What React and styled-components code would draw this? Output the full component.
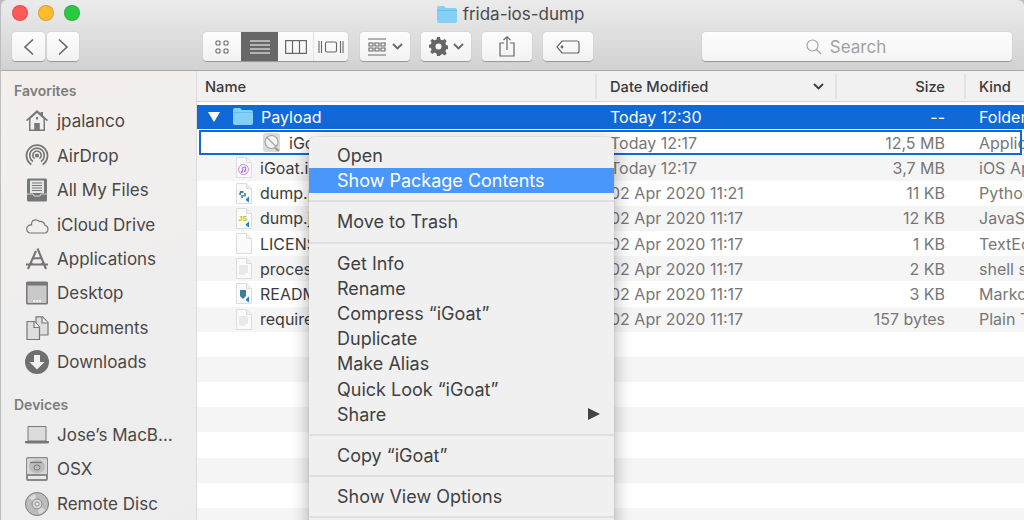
import React from 'react';
import styled, { createGlobalStyle } from 'styled-components';

const GlobalStyle = createGlobalStyle`
  html, body { margin: 0; padding: 0; background: #c9c9c9; }
  body { font-family: Inter, "Liberation Sans", sans-serif; }
`;

const COLUMNS = '398px 240px 129px 1fr';

const Page = styled.div`
  width: 1024px;
  height: 520px;
  overflow: hidden;
  position: relative;
  display: flex;
  flex-direction: column;
  box-sizing: border-box;
  padding-left: 1px;
  background: #bdbdbd;
`;

const TitleBar = styled.header`
  height: 71px;
  flex: none;
  box-sizing: border-box;
  padding: 5px 11px 0;
  border-radius: 6px 6px 0 0;
  border-bottom: 1px solid #a9a8a9;
  background: linear-gradient(#ebebeb, #d3d2d3);
`;

const TopRow = styled.div`
  height: 27px;
  display: flex;
  align-items: flex-start;
  position: relative;
  justify-content: center;
`;

const Lights = styled.div`
  position: absolute;
  left: 0;
  top: 0;
  display: flex;
  gap: 10px;
`;

const Light = styled.span`
  width: 16px;
  height: 16px;
  border-radius: 50%;
  background: ${p => p.$color};
  border: 0.5px solid rgba(0, 0, 0, 0.12);
  box-sizing: border-box;
`;

const Title = styled.div`
  display: flex;
  align-items: center;
  gap: 6px;
  height: 18px;
  margin-right: 4px;
  font-size: 17px;
  color: #4b4a4b;
`;

const Toolbar = styled.div`
  display: flex;
  align-items: stretch;
  height: 29px;
`;

const Btn = styled.button`
  display: flex;
  align-items: center;
  justify-content: center;
  gap: 5px;
  width: ${p => p.$w}px;
  margin-left: ${p => p.$ml || 0}px;
  padding: 0;
  height: 29px;
  background: linear-gradient(#fdfdfd, #f2f2f2);
  border: none;
  border-radius: 4px;
  box-shadow: 0 0.5px 1px rgba(0, 0, 0, 0.3);
  color: #666;
`;

const Segment = styled.div`
  display: flex;
  margin-left: ${p => p.$ml}px;
  border-radius: 4px;
  overflow: hidden;
  box-shadow: 0 0.5px 1px rgba(0, 0, 0, 0.3);
`;

const SegItem = styled.div`
  width: ${p => p.$w}px;
  display: flex;
  align-items: center;
  justify-content: center;
  background: ${p => (p.$on ? '#676767' : 'linear-gradient(#fdfdfd, #f2f2f2)')};
  color: ${p => (p.$on ? '#fff' : '#666')};
  border-left: ${p => (p.$line ? '1px solid #e2e2e2' : 'none')};
  box-sizing: border-box;
`;

const SearchBox = styled.div`
  width: 310px;
  margin-left: 109px;
  height: 29px;
  box-sizing: border-box;
  padding-right: 22px;
  display: flex;
  align-items: center;
  justify-content: center;
  gap: 8px;
  font-size: 17px;
  color: #a3a1a3;
  background: linear-gradient(#fdfdfd, #f4f4f4);
  border-radius: 4px;
  box-shadow: 0 0.5px 1px rgba(0, 0, 0, 0.3);
`;

const Body = styled.div`
  flex: 1;
  min-height: 0;
  display: flex;
`;

const Sidebar = styled.aside`
  width: 196px;
  flex: none;
  box-sizing: border-box;
  padding: 11px 0 0 13px;
  background: linear-gradient(160deg, #f4efed, #eeeeee 60%, #ededee);
  border-right: 1px solid #dcdcdc;
`;

const SideHead = styled.div`
  font-size: 14px;
  font-weight: 600;
  line-height: 17px;
  color: #7f7c7c;
  margin-top: ${p => (p.$top ? '16px' : '0')};
  padding-bottom: 5px;
`;

const SideItem = styled.div`
  height: 34.45px;
  display: flex;
  align-items: center;
  gap: 8px;
  padding-left: 11px;
  font-size: 17px;
  color: #4a4747;
  white-space: nowrap;
`;

const IconSlot = styled.span`
  width: 24px;
  height: 24px;
  flex: none;
  display: flex;
  align-items: center;
  justify-content: center;
  color: #757575;
`;

const Main = styled.main`
  flex: 1;
  min-width: 0;
  display: flex;
  flex-direction: column;
  background: #fff;
`;

const HeaderRow = styled.div`
  height: 31px;
  flex: none;
  display: grid;
  grid-template-columns: ${COLUMNS};
  box-sizing: border-box;
  background: #f1f1f1;
  border-bottom: 1px solid #d4d4d4;
  font-size: 14.7px;
  font-weight: 500;
  color: #3a3a3a;
`;

const HeadCell = styled.div`
  display: flex;
  align-items: center;
  justify-content: ${p => (p.$right ? 'flex-end' : 'space-between')};
  height: 25px;
  margin-top: 3px;
  padding: 0 ${p => p.$pr}px 0 ${p => p.$pl}px;
  border-left: ${p => (p.$line ? '2px solid #e2e2e2' : 'none')};
  box-sizing: border-box;
`;

const Rows = styled.div`
  flex: 1;
  display: flex;
  flex-direction: column;
  overflow: hidden;
  padding-top: 3px;
  background: #fff;
`;

const Row = styled.div`
  position: relative;
  height: ${p => (p.$selected ? '23.5px' : '25.2px')};
  margin-bottom: ${p => (p.$selected ? '1.7px' : '0')};
  flex: none;
  display: grid;
  grid-template-columns: ${COLUMNS};
  align-items: center;
  box-sizing: border-box;
  font-size: 16px;
  white-space: nowrap;
  overflow: hidden;
  color: ${p => (p.$selected ? '#fff' : '#777')};
  background: ${p => (p.$selected ? '#1169d8' : p.$stripe ? '#f5f5f5' : '#fff')};
`;

const Outline = styled.span`
  position: absolute;
  inset: 0 2px 0 2px;
  border: 2.5px solid #1169d8;
  pointer-events: none;
`;

const NameCell = styled.div`
  display: flex;
  align-items: center;
  padding-left: ${p => p.$indent}px;
  gap: 8px;
  color: ${p => (p.$selected ? '#fff' : '#3c3c3c')};
  min-width: 0;
`;

const Disclosure = styled.svg`
  margin-right: 5px;
`;

const DateCell = styled.div`
  padding-left: 15px;
`;

const SizeCell = styled.div`
  padding-right: 19px;
  text-align: right;
`;

const KindCell = styled.div`
  padding-left: 15px;
`;

const Menu = styled.div`
  position: absolute;
  left: 309px;
  top: 137px;
  width: 305px;
  height: 400px;
  padding-top: 6px;
  box-sizing: border-box;
  background: #f0f0f0;
  border-radius: 5px;
  box-shadow: 0 4px 18px rgba(0, 0, 0, 0.32), 0 0 1px rgba(0, 0, 0, 0.4);
  font-size: 18px;
  color: #414141;
`;

const MenuItem = styled.div`
  height: 25.2px;
  display: flex;
  align-items: center;
  justify-content: space-between;
  padding: 0 14px 0 28px;
  white-space: nowrap;
  background: ${p => (p.$on ? '#4a97fb' : 'transparent')};
  color: ${p => (p.$on ? '#fff' : 'inherit')};
`;

const MenuSep = styled.div`
  height: 2px;
  margin: 7px 0;
  background: #dfdfdf;
`;

const Arrow = styled.span`
  width: 0;
  height: 0;
  border-left: 12px solid #444;
  border-top: 6.5px solid transparent;
  border-bottom: 6.5px solid transparent;
`;

const Folder = ({ w = 20, h = 17 }) => (
  <svg width={w} height={h} viewBox="0 0 20 17">
    <path d="M0 2q0-2 2-2h5l2 2h9q2 0 2 2v11q0 2-2 2H2q-2 0-2-2z" fill="#83cff6" />
    <path d="M0 4h20v1H0z" fill="#6cbdea" />
  </svg>
);

const Stroke = ({ w = 24, h = 24, vb = '0 0 24 24', sw = 1.3, children }) => (
  <svg width={w} height={h} viewBox={vb} fill="none" stroke="currentColor" strokeWidth={sw}>
    {children}
  </svg>
);

const sideIcons = {
  home: (
    <svg width="24" height="24" viewBox="0 0 24 24">
      <path d="M12 1 1 11l1 1.2L4 10.500V22h16V10.500l2 1.700 1-1.200L18 6.500V3h-2.500v1.300z" fill="#777" />
      <path d="M5.500 9.800 12 4l6.500 5.800V20.500h-4V14h-5v6.500h-4z" fill="#efefef" />
      <path d="M9.500 14h5v8h-5z" fill="#777" />
      <path d="M11 8h2v2.500h-2z" fill="#777" />
    </svg>
  ),
  airdrop: (
    <Stroke sw={1.6}>
      <path d="M6.400 20.500a10.500 10.500 0 1 1 11.200 0" strokeWidth="1.800" />
      <path d="M8 17.500a7.300 7.300 0 1 1 8 0" />
      <path d="M9.600 14.700a4.200 4.200 0 1 1 4.800 0" />
      <circle cx="12" cy="11.500" r="1.300" fill="currentColor" />
    </Stroke>
  ),
  files: (
    <svg width="24" height="24" viewBox="0 0 24 24">
      <path d="M2 2q0-1.500 1.500-1.500h17Q22 .5 22 2v20q0 1.500-1.500 1.500h-17Q2 23.500 2 22z" fill="#777" />
      <path d="M5 2.500h14v12.500H5z" fill="#e6e6e6" />
      <path d="M7 5h10M7 7.500h10M7 10h10M7 12.500h10" stroke="#777" strokeWidth="1" />
      <path d="M2 16h6l1 2h6l1-2h6" stroke="#eee" strokeWidth="0.800" fill="none" />
    </svg>
  ),
  cloud: (
    <svg width="24" height="18" viewBox="0 0 24 18" fill="none" stroke="#777" strokeWidth="1.200">
      <path d="M5 17h14.500a3.800 3.800 0 0 0 .5-7.500 4.500 4.500 0 0 0-5.500-4A6 6 0 0 0 8 4.500 5 5 0 0 0 6.500 9 4 4 0 0 0 5 17z" />
    </svg>
  ),
  apps: (
    <Stroke sw={2.1}>
      <path d="M12.500 1.500 21 22M11 4 3 22M1 17.500h22M7.500 11.500l9-.5" />
      <path d="M5 15.500 8 17M19 15.500 16 17" strokeWidth="1.300" />
    </Stroke>
  ),
  desktop: (
    <svg width="24" height="24" viewBox="0 0 24 24">
      <path d="M1 2q0-1.500 1.500-1.500h19Q23 .5 23 2v20q0 1.500-1.500 1.500h-19Q1 23.500 1 22z" fill="#777" />
      <path d="M2.500 4.500h19V22h-19z" fill="#c9c9c9" />
      <path d="M8 19h2v2H8zM11 19h2v2h-2zM14 19h2v2h-2z" fill="#f2f2f2" />
    </svg>
  ),
  docs: (
    <svg width="24" height="24" viewBox="0 0 24 24" stroke="#777" strokeWidth="1.200">
      <path d="M11 .8h6.500L23 6.500V19H11z" fill="#dedede" />
      <path d="M17 1v6h6" fill="#f0f0f0" />
      <path d="M2 5.500h7.500L14.500 11v12.500H2z" fill="#dedede" />
      <path d="M9 5.500V11.500h5.500" fill="#f0f0f0" />
    </svg>
  ),
  down: (
    <svg width="24" height="24" viewBox="0 0 24 24">
      <circle cx="12" cy="12" r="12" fill="#6f6f6f" />
      <path d="M9 5h6v7h4.500L12 19.500 4.500 12H9z" fill="#f2f2f2" />
    </svg>
  ),
  laptop: (
    <svg width="24" height="18" viewBox="0 0 24 18">
      <path d="M2.500 1q0-1 1-1h17q1 0 1 1v14h-19z" fill="#777" />
      <path d="M3.500 1h17v13.500h-17z" fill="#dcdcdc" />
      <path d="M0 15h24v1.200q0 1.300-2 1.300H2q-2 0-2-1.300z" fill="#777" />
    </svg>
  ),
  disk: (
    <svg width="22" height="24" viewBox="0 0 22 24">
      <path d="M2 0h18q2 0 2 2v20q0 2-2 2H2q-2 0-2-2V2q0-2 2-2z" fill="#8a8a8a" />
      <path d="M2 1.200h18l1 1V17H1V2.200z" fill="#d6d6d6" />
      <ellipse cx="11" cy="9.500" rx="8" ry="7" fill="#bdbdbd" />
      <ellipse cx="11" cy="10.500" rx="3" ry="2.500" fill="none" stroke="#777" />
      <path d="M4 5.500h12" stroke="#777" strokeWidth="1.200" />
      <path d="M2 19h18v3H2z" fill="#e8e8e8" />
    </svg>
  ),
  disc: (
    <svg width="24" height="24" viewBox="0 0 24 24">
      <circle cx="12" cy="12" r="11.500" fill="#bcbcbc" stroke="#7a7a7a" />
      <path d="M12 12 4 6a10 10 0 0 1 6-4zM12 12l8 6a10 10 0 0 1-6 4z" fill="#dadada" />
      <circle cx="12" cy="12" r="5" fill="#d8d8d8" stroke="#8a8a8a" />
      <circle cx="12" cy="12" r="2" fill="#f3f3f3" stroke="#8a8a8a" />
    </svg>
  ),
};

const favorites = [
  ['home', 'jpalanco'],
  ['airdrop', 'AirDrop'],
  ['files', 'All My Files'],
  ['cloud', 'iCloud Drive'],
  ['apps', 'Applications'],
  ['desktop', 'Desktop'],
  ['docs', 'Documents'],
  ['down', 'Downloads'],
];

const devices = [
  ['laptop', 'Jose’s MacB…'],
  ['disk', 'OSX'],
  ['disc', 'Remote Disc'],
];

const Sheet = ({ children }) => (
  <svg width="17" height="21" viewBox="0 0 17 21">
    <path d="M1.500.5h10l5 5v15h-15z" fill="#fbfbfb" stroke="#dcdcdc" />
    <path d="M11.500.5v5h5" fill="#f0f0f0" stroke="#dcdcdc" />
    {children}
  </svg>
);

const TextLines = (
  <path d="M4 8h9M4 10h9M4 12h9M4 14h9M4 16h6" stroke="#cfcfcf" strokeWidth="0.800" />
);

const VsBadge = <path d="M11 16l3-2.500v6L11 17.500z" fill="#2f80c8" />;

const fileIcons = {
  app: (
    <svg width="18" height="20" viewBox="0 0 18 20">
      <rect width="17" height="19" rx="3" fill="#d9dcde" />
      <circle cx="8.500" cy="9" r="6.500" fill="#f4f4f4" stroke="#a5a5a5" strokeWidth="1.200" />
      <path d="M4 4.500l9 9" stroke="#a5a5a5" strokeWidth="1.200" />
      <path d="M12 15l4 3" stroke="#b39365" strokeWidth="2" />
    </svg>
  ),
  ipa: (
    <Sheet>
      <circle cx="8.500" cy="12.500" r="5" fill="#f7eef6" stroke="#d98ad0" />
      <path d="M7.500 15v-4.500l3-.5v4" stroke="#5c8fe0" strokeWidth="0.900" fill="none" />
      <circle cx="6.800" cy="15" r="0.900" fill="#c45fc0" />
      <circle cx="9.800" cy="14" r="0.900" fill="#c45fc0" />
    </Sheet>
  ),
  py: (
    <Sheet>
      <path d="M5 8h3.500v2H6v2H4z" fill="#3f7fa8" />
      <path d="M6 12h3v-2h2v3.500H8V15H6z" fill="#5f9a9f" />
      {VsBadge}
    </Sheet>
  ),
  js: (
    <Sheet>
      <text x="3.500" y="13" fontSize="7" fontWeight="700" fontFamily="Liberation Sans" fill="#c5b22c">JS</text>
      {VsBadge}
    </Sheet>
  ),
  blank: <Sheet />,
  text: <Sheet>{TextLines}</Sheet>,
  md: (
    <Sheet>
      <path d="M5 7h6v6l-3 3-3-3z" fill="#3c7f9c" />
      {VsBadge}
    </Sheet>
  ),
};

const files = [
  { icon: 'app', name: 'iGoat.app', date: 'Today 12:17', size: '12,5 MB', kind: 'Application', indent: 66, outlined: true },
  { icon: 'ipa', name: 'iGoat.ipa', date: 'Today 12:17', size: '3,7 MB', kind: 'iOS App', stripe: true },
  { icon: 'py', name: 'dump.py', date: '02 Apr 2020 11:21', size: '11 KB', kind: 'Python Script' },
  { icon: 'js', name: 'dump.js', date: '02 Apr 2020 11:17', size: '12 KB', kind: 'JavaScript', stripe: true },
  { icon: 'blank', name: 'LICENSE', date: '02 Apr 2020 11:17', size: '1 KB', kind: 'TextEdit' },
  { icon: 'text', name: 'process.sh', date: '02 Apr 2020 11:17', size: '2 KB', kind: 'shell script', stripe: true },
  { icon: 'md', name: 'README.md', date: '02 Apr 2020 11:17', size: '3 KB', kind: 'Markdown' },
  { icon: 'text', name: 'requirements.txt', date: '02 Apr 2020 11:17', size: '157 bytes', kind: 'Plain Text', stripe: true },
];

const Chevron = () => (
  <svg width="11" height="7" viewBox="0 0 11 7" fill="none" stroke="currentColor" strokeWidth="1.800">
    <path d="M1 1l4.500 4.500L10 1" />
  </svg>
);

const menu = [
  ['Open'],
  ['Show Package Contents', true],
  null,
  ['Move to Trash'],
  null,
  ['Get Info'],
  ['Rename'],
  ['Compress “iGoat”'],
  ['Duplicate'],
  ['Make Alias'],
  ['Quick Look “iGoat”'],
  ['Share', false, true],
  null,
  ['Copy “iGoat”'],
  null,
  ['Show View Options'],
  null,
];

export default function App() {
  return (
    <Page>
      <GlobalStyle />
      <TitleBar>
        <TopRow>
          <Lights>
            <Light $color="#fc5b57" />
            <Light $color="#fdbb2e" />
            <Light $color="#2ac940" />
          </Lights>
          <Title>
            <Folder />
            frida-ios-dump
          </Title>
        </TopRow>
        <Toolbar>
          <Btn $w={33}>
            <Stroke w={12} h={18} vb="0 0 12 18" sw={1.600}><path d="M10 1.500 2 9l8 7.500" /></Stroke>
          </Btn>
          <Btn $w={32} $ml={2}>
            <Stroke w={12} h={18} vb="0 0 12 18" sw={1.600}><path d="M2 1.500 10 9l-8 7.500" /></Stroke>
          </Btn>
          <Segment $ml={124}>
            <SegItem $w={38}>
              <Stroke w={14} h={14} vb="0 0 14 14" sw={1.100}>
                <rect x="1" y="1" width="4" height="4" rx="1" />
                <rect x="9" y="1" width="4" height="4" rx="1" />
                <rect x="1" y="9" width="4" height="4" rx="1" />
                <rect x="9" y="9" width="4" height="4" rx="1" />
              </Stroke>
            </SegItem>
            <SegItem $w={37} $on>
              <Stroke w={20} h={14} vb="0 0 20 14" sw={1.100}>
                <path d="M0 1h20M0 5h20M0 9h20M0 13h20" />
              </Stroke>
            </SegItem>
            <SegItem $w={35}>
              <Stroke w={22} h={14} vb="0 0 22 14" sw={1.200}>
                <rect x=".6" y=".6" width="20.800" height="12.800" />
                <path d="M7.500 1v12M14.500 1v12" />
              </Stroke>
            </SegItem>
            <SegItem $w={35} $line>
              <Stroke w={26} h={14} vb="0 0 26 14" sw={1.100}>
                <rect x="7.500" y="2" width="11" height="10" rx="1.500" />
                <path d="M1 1v12M3.500 1v12M22.500 1v12M25 1v12" />
              </Stroke>
            </SegItem>
          </Segment>
          <Btn $w={50} $ml={12}>
            <Stroke w={20} h={18} vb="0 0 20 18" sw={1.100}>
              <path d="M1 1h18M1 17h18" />
              <path d="M2 5h4v3H2zM8 5h4v3H8zM14 5h4v3h-4zM2 10h4v3H2zM8 10h4v3H8zM14 10h4v3h-4z" />
            </Stroke>
            <Chevron />
          </Btn>
          <Btn $w={50} $ml={11}>
            <svg width="19" height="19" viewBox="0 0 19 19">
              <path
                d="M8 0h3l.5 2.500 2 .8L15.700 2l2 2-1.300 2.200.8 2 2.800.5v3l-2.800.5-.8 2 1.300 2.200-2 2-2.200-1.300-2 .8L11 19H8l-.5-2.600-2-.8L3.300 17l-2-2 1.300-2.200-.8-2L0 10.700v-3l1.800-.5.800-2L1.300 4l2-2 2.200 1.300 2-.8z"
                fill="#666"
              />
              <circle cx="9.500" cy="9.500" r="3" fill="#f8f8f8" />
            </svg>
            <Chevron />
          </Btn>
          <Btn $w={50} $ml={11}>
            <Stroke w={16} h={21} vb="0 0 16 21" sw={1.200}>
              <path d="M5 7H1v13h14V7h-4M8 14V1M4.500 4 8 .8 11.500 4" />
            </Stroke>
          </Btn>
          <Btn $w={50} $ml={11}>
            <Stroke w={24} h={14} vb="0 0 24 14" sw={1.200}>
              <path d="M6 1h15q2 0 2 2v8q0 2-2 2H6L1 7z" />
              <circle cx="6" cy="7" r=".8" fill="currentColor" />
            </Stroke>
          </Btn>
          <SearchBox>
            <Stroke w={16} h={16} vb="0 0 16 16" sw={1.200}>
              <circle cx="6.500" cy="6.500" r="5.500" />
              <path d="M10.500 10.500 15 15" />
            </Stroke>
            Search
          </SearchBox>
        </Toolbar>
      </TitleBar>
      <Body>
        <Sidebar>
          <SideHead>Favorites</SideHead>
          {favorites.map(([icon, label]) => (
            <SideItem key={label}>
              <IconSlot>{sideIcons[icon]}</IconSlot>
              {label}
            </SideItem>
          ))}
          <SideHead $top>Devices</SideHead>
          {devices.map(([icon, label]) => (
            <SideItem key={label}>
              <IconSlot>{sideIcons[icon]}</IconSlot>
              {label}
            </SideItem>
          ))}
        </Sidebar>
        <Main>
          <HeaderRow>
            <HeadCell $pl={8} $pr={8}>Name</HeadCell>
            <HeadCell $pl={13} $pr={11} $line>
              Date Modified
              <Chevron />
            </HeadCell>
            <HeadCell $pl={0} $pr={19} $right $line>Size</HeadCell>
            <HeadCell $pl={13} $pr={0} $line>Kind</HeadCell>
          </HeaderRow>
          <Rows>
            <Row $selected>
              <NameCell $indent={11} $selected>
                <Disclosure width="12" height="10" viewBox="0 0 12 10"><path d="M0 0h12L6 10z" fill="#fff" /></Disclosure>
                <Folder />
                <span>Payload</span>
              </NameCell>
              <DateCell>Today 12:30</DateCell>
              <SizeCell>--</SizeCell>
              <KindCell>Folder</KindCell>
            </Row>
            {files.map(f => (
              <Row key={f.name} $stripe={f.stripe}>
                <NameCell $indent={f.indent || 38}>
                  {fileIcons[f.icon]}
                  <span>{f.name}</span>
                </NameCell>
                <DateCell>{f.date}</DateCell>
                <SizeCell>{f.size}</SizeCell>
                <KindCell>{f.kind}</KindCell>
                {f.outlined && <Outline />}
              </Row>
            ))}
            {[...Array(8)].map((_, i) => (
              <Row key={i} $stripe={i % 2 === 1} />
            ))}
          </Rows>
        </Main>
      </Body>
      <Menu>
        {menu.map((m, i) =>
          m ? (
            <MenuItem key={m[0]} $on={m[1]}>
              {m[0]}
              {m[2] && <Arrow />}
            </MenuItem>
          ) : (
            <MenuSep key={i} />
          )
        )}
      </Menu>
    </Page>
  );
}
